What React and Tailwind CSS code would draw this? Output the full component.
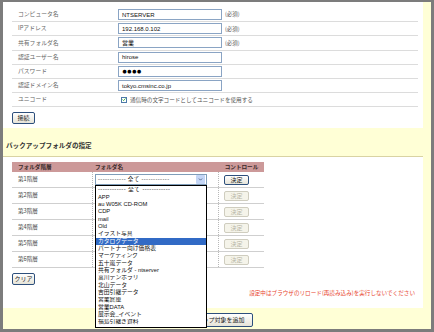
import React from 'react';

const fields = [
  { label: 'コンピュータ名', value: 'NTSERVER', required: true },
  { label: 'IPアドレス', value: '192.168.0.102', required: true },
  { label: '共有フォルダ名', value: '営業', required: true },
  { label: '認証ユーザー名', value: 'hirose' },
  { label: 'パスワード', value: '●●●●', password: true },
  { label: '認証ドメイン名', value: 'tokyo.cmsinc.co.jp' },
];

const levels = ['第1階層', '第2階層', '第3階層', '第4階層', '第5階層', '第6階層'];

const folders = [
  '------------ 全て ------------',
  'APP',
  'au W05K CD-ROM',
  'CDP',
  'mail',
  'Old',
  'イラスト写真',
  'カタログデータ',
  'パートナー向け価格表',
  'マーケティング',
  '五十嵐データ',
  '共有フォルダ - ntserver',
  '富川テンポラリ',
  '北山データ',
  '吉田引継データ',
  '営業倉庫',
  '営業DATA',
  '展示会_イベント',
  '福島引継ぎ資料',
];

const font = { fontFamily: '"Noto Sans CJK JP", "Liberation Sans", sans-serif' };
const latinFirst = { fontFamily: '"Liberation Sans", "Noto Sans CJK JP", sans-serif' };

function XpButton({ children, disabled, className = '' }) {
  return (
    <button
      className={`flex items-center justify-center rounded-[2px] border text-[6px] leading-none ${
        disabled
          ? 'border-[#cfcdbf] bg-[#f5f4ea] text-[#b8b6a6]'
          : 'border-[#2d4f7c] bg-gradient-to-b from-white to-[#e6e4d8] text-[#222]'
      } ${className}`}
    >
      {children}
    </button>
  );
}

export default function App() {
  return (
    <div
      className="relative flex h-[332px] w-[434px] flex-col overflow-hidden border-t-2 border-r-[3px] border-b-[3px] border-l-[3px] border-[#7c7c7c] bg-[#ffffd6]"
      style={font}
    >
      {/* Connection settings */}
      <div className="mr-[8px] h-[126px] bg-white pt-[6px] pl-[9px] pr-[5px]">
        {fields.map((f) => (
          <div key={f.label} className="flex h-[14.2px] items-center border-b border-[#dcdcdc]">
            <span className="w-[106px] pl-[6px] text-[5.8px] text-[#666]">{f.label}</span>
            <div className="flex h-[11px] w-[104px] items-center overflow-hidden border border-[#8aa4c4] bg-white pl-[3px]">
              <span
                className={
                  f.password
                    ? 'text-[8.5px] leading-none tracking-[-0.3px] text-black'
                    : 'text-[6px] leading-none text-[#111]'
                }
                style={latinFirst}
              >
                {f.value}
              </span>
            </div>
            {f.required && <span className="ml-[3px] text-[5.5px] text-[#555]">(必須)</span>}
          </div>
        ))}
        <div className="flex h-[14.2px] items-center border-b border-[#dcdcdc]">
          <span className="w-[106px] pl-[6px] text-[5.8px] text-[#666]">ユニコード</span>
          <span className="ml-[3px] flex h-[6px] w-[6px] items-center justify-center border border-[#4c7aa8] bg-white">
            <svg viewBox="0 0 8 8" className="h-[5px] w-[5px]">
              <path d="M1 4 L3.2 6.2 L7 1.8" fill="none" stroke="#21a121" strokeWidth="1.6" />
            </svg>
          </span>
          <span className="ml-[3px] text-[5.6px] text-[#555]">通信時の文字コードとしてユニコードを使用する</span>
        </div>
        <XpButton className="mt-[4.5px] h-[12px] w-[23px]">接続</XpButton>
      </div>

      {/* Section heading */}
      <div className="mr-[8px] flex h-[29px] items-end border-b border-[#d9d3a3] pb-[5px] pl-[3px]">
        <h2 className="text-[6.6px] font-bold text-[#333]">バックアップフォルダの指定</h2>
      </div>

      {/* Folder table */}
      <div className="mr-[8px] flex h-[151px] flex-col bg-white pt-[5px] pl-[9px] pr-[8px]">
        <div className="w-[252px]">
          <div className="flex h-[10px] items-center bg-[#cc9999] text-[5.6px] font-bold text-[#3a2a2a]">
            <span className="w-[80px] pl-[6px]">フォルダ階層</span>
            <span className="w-[127px] pl-[3px]">フォルダ名</span>
            <span className="w-[45px] text-center">コントロール</span>
          </div>
          {levels.map((lv, i) => (
            <div key={lv} className="flex h-[16px] items-stretch border-b border-[#cfcfcf]">
              <span className="flex w-[80px] items-center pl-[6px] text-[5.6px] text-[#444]">{lv}</span>
              <div className="flex w-[127px] items-center border-x border-dotted border-[#b8b8b8] pl-[2px]">
                {i === 0 && (
                  <div className="flex h-[11px] w-[112px] items-center border border-[#7f9db9] bg-white">
                    <span className="flex-1 pl-[2px] text-[5.6px] leading-none tracking-[0.4px] whitespace-nowrap text-[#222]">
                      ------------ 全て ------------
                    </span>
                    <span className="mr-[1px] flex h-[9px] w-[9px] items-center justify-center rounded-[1px] bg-[#c4d6f6]">
                      <svg viewBox="0 0 8 8" className="h-[5px] w-[5px]">
                        <path d="M1.5 2.5 L4 5 L6.5 2.5" fill="none" stroke="#4d6185" strokeWidth="1.4" />
                      </svg>
                    </span>
                  </div>
                )}
              </div>
              <div className="flex w-[45px] items-center pl-[5px]">
                <XpButton disabled={i !== 0} className="h-[10px] w-[25px]">
                  決定
                </XpButton>
              </div>
            </div>
          ))}
        </div>
        <XpButton className="mt-[5px] h-[12px] w-[23px]">クリア</XpButton>
        <p className="mt-[4px] text-right text-[5.6px] text-[#e8452f]">
          設定中はブラウザのリロード(再読み込み)を実行しないでください
        </p>
      </div>

      {/* Footer */}
      <div className="flex flex-1 items-start pt-[5px] pl-[167px]">
        <XpButton className="h-[14px] w-[83px] text-[6px]">バックアップ対象を追加</XpButton>
      </div>

      {/* Open dropdown list */}
      <ul
        className="absolute top-[183px] left-[92px] w-[112px] border border-black bg-white py-[0.5px]"
        style={latinFirst}
      >
        {folders.map((name, i) => (
          <li
            key={name}
            className={`flex h-[7.35px] items-center overflow-hidden pl-[2px] text-[5.8px] leading-none whitespace-nowrap ${
              i === 0 ? 'tracking-[0.4px]' : ''
            } ${name === 'カタログデータ' ? 'bg-[#316ac5] text-white' : 'text-[#111]'}`}
          >
            {name}
          </li>
        ))}
      </ul>
    </div>
  );
}
